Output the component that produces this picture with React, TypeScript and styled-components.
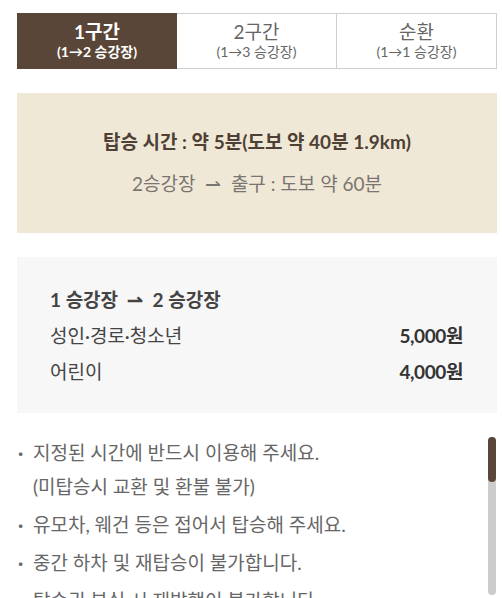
import styled, { createGlobalStyle } from "styled-components";

const GlobalStyle = createGlobalStyle`
  html, body {
    margin: 0;
    padding: 0;
    overflow: hidden;
    background: #fff;
  }
  body {
    font-family: Lato, "Noto Sans CJK KR", sans-serif;
    color: #555;
  }
`;

const Page = styled.div`
  width: 480px;
  padding: 13px 0 0 17px;
`;

const Tabs = styled.div`
  display: grid;
  grid-template-columns: repeat(3, 1fr);
  height: 56px;
`;

const Tab = styled.div<{ $active?: boolean }>`
  display: flex;
  flex-direction: column;
  align-items: center;
  justify-content: center;
  box-sizing: border-box;
  background: ${(p) => (p.$active ? "#5a4638" : "#fff")};
  color: ${(p) => (p.$active ? "#fff" : "#666")};
  border: 1px solid ${(p) => (p.$active ? "#5a4638" : "#cfcfcf")};
  border-left-width: ${(p) => (p.$active ? "1px" : "0")};
  font-weight: ${(p) => (p.$active ? 700 : 400)};
`;

const TabTitle = styled.span`
  font-size: 19px;
  line-height: 21px;
`;

const TabSub = styled.span`
  font-size: 14px;
  line-height: 20px;
`;

const InfoBox = styled.div`
  margin-top: 24px;
  background: #f0e8d7;
  padding: 28px 0;
  text-align: center;
  line-height: 42px;
  font-size: 19px;
`;

const InfoMain = styled.div`
  font-weight: 700;
  color: #4e4034;
`;

const InfoSub = styled.div`
  color: #7a7570;
`;

const FareBox = styled.div`
  margin-top: 24px;
  background: #f7f7f7;
  padding: 25px 34px 23px 33px;
  line-height: 36px;
  font-size: 19px;
`;

const FareHead = styled.div`
  font-weight: 700;
  color: #444;
`;

const FareRow = styled.div`
  display: flex;
  justify-content: space-between;
  color: #444;
`;

const Price = styled.span`
  font-weight: 700;
  color: #333;
  letter-spacing: -0.4px;
`;

const NoticeArea = styled.div`
  position: relative;
  height: 185px;
  overflow: hidden;
`;

const NoticeList = styled.ul`
  list-style: none;
  margin: 23px 0 0;
  padding: 0 20px 0 0;
  display: flex;
  flex-direction: column;
  gap: 4px;
`;

const NoticeItem = styled.li`
  display: flex;
  font-size: 19px;
  line-height: 34px;
  color: #666;

  &::before {
    content: "·";
    width: 16px;
    flex: none;
    padding-left: 1px;
    box-sizing: border-box;
    font-weight: 700;
  }
`;

const Track = styled.div`
  position: absolute;
  top: 24px;
  right: 1px;
  width: 8px;
  height: 158px;
  border-radius: 4px;
  background: #cccccc;
`;

const Thumb = styled.div`
  height: 45px;
  border-radius: 4px;
  background: #5a4638;
`;

export default function App() {
  return (
    <>
      <GlobalStyle />
      <Page>
        <Tabs>
          <Tab $active>
            <TabTitle>1구간</TabTitle>
            <TabSub>(1→2 승강장)</TabSub>
          </Tab>
          <Tab>
            <TabTitle>2구간</TabTitle>
            <TabSub>(1→3 승강장)</TabSub>
          </Tab>
          <Tab>
            <TabTitle>순환</TabTitle>
            <TabSub>(1→1 승강장)</TabSub>
          </Tab>
        </Tabs>

        <InfoBox>
          <InfoMain>탑승 시간 : 약 5분(도보 약 40분 1.9km)</InfoMain>
          <InfoSub>2승강장 &nbsp;⇀&nbsp; 출구 : 도보 약 60분</InfoSub>
        </InfoBox>

        <FareBox>
          <FareHead>1 승강장 &nbsp;⇀&nbsp; 2 승강장</FareHead>
          <FareRow>
            <span>성인·경로·청소년</span>
            <Price>5,000원</Price>
          </FareRow>
          <FareRow>
            <span>어린이</span>
            <Price>4,000원</Price>
          </FareRow>
        </FareBox>

        <NoticeArea>
          <NoticeList>
            <NoticeItem>
              <span>
                지정된 시간에 반드시 이용해 주세요.
                <br />
                (미탑승시 교환 및 환불 불가)
              </span>
            </NoticeItem>
            <NoticeItem>유모차, 웨건 등은 접어서 탑승해 주세요.</NoticeItem>
            <NoticeItem>중간 하차 및 재탑승이 불가합니다.</NoticeItem>
            <NoticeItem>탑승권 분실 시 재발행이 불가합니다.</NoticeItem>
          </NoticeList>
          <Track>
            <Thumb />
          </Track>
        </NoticeArea>
      </Page>
    </>
  );
}
